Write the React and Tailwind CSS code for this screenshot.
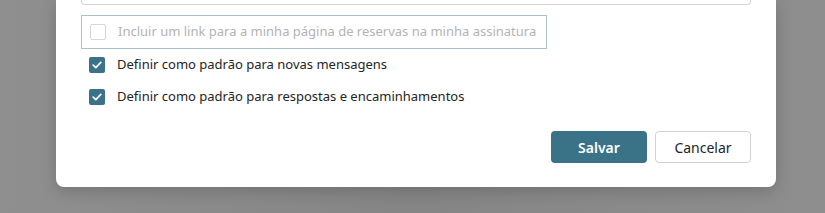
import React from 'react';

function Check({ checked }) {
  if (!checked) {
    return <span className="w-[16px] h-[16px] rounded-[2px] border border-[#d6d6d6] bg-white shrink-0" />;
  }
  return (
    <span className="w-[16px] h-[16px] rounded-[2px] bg-[#3a7287] shrink-0 flex items-center justify-center">
      <svg width="10" height="8" viewBox="0 0 10 8" fill="none">
        <path d="M1.2 4.2 L3.8 6.6 L8.8 1.4" stroke="white" strokeWidth="1.7" strokeLinecap="round" strokeLinejoin="round" />
      </svg>
    </span>
  );
}

export default function App() {
  return (
    <div className="w-[825px] h-[213px] overflow-hidden bg-gradient-to-r from-[#8f8f8f] via-[#858585] to-[#8e8e8e] font-['Noto_Sans',sans-serif]">
      <div className="ml-[56px] w-[720px] h-[187px] bg-white rounded-b-[8px] shadow-[0_4px_16px_rgba(0,0,0,0.18)] px-[25px] flex flex-col">
        {/* bottom of the signature editor above */}
        <div className="w-[670px] h-[5px] border-x border-b border-[#d4d4d4] rounded-b-[4px]" />

        <div className="mt-[10px] w-[466px] h-[34px] border border-[#a9c3cd] flex items-center pl-[8px] gap-[12px]">
          <Check checked={false} />
          <span className="text-[13px] text-[#b3b3b3] whitespace-nowrap">
            Incluir um link para a minha página de reservas na minha assinatura
          </span>
        </div>

        <div className="h-[32px] flex items-center pl-[8px] gap-[12px]">
          <Check checked />
          <span className="text-[13px] text-[#242424]">Definir como padrão para novas mensagens</span>
        </div>
        <div className="h-[32px] flex items-center pl-[8px] gap-[12px]">
          <Check checked />
          <span className="text-[13px] text-[#242424]">Definir como padrão para respostas e encaminhamentos</span>
        </div>

        <div className="mt-[18px] flex justify-end gap-[8px] w-[670px]">
          <button className="w-[96px] h-[32px] rounded-[4px] bg-[#3a7287] text-white text-[14px] font-semibold">
            Salvar
          </button>
          <button className="w-[96px] h-[32px] rounded-[4px] border border-[#d1d1d1] bg-white text-[#242424] text-[14px]">
            Cancelar
          </button>
        </div>
      </div>
    </div>
  );
}
